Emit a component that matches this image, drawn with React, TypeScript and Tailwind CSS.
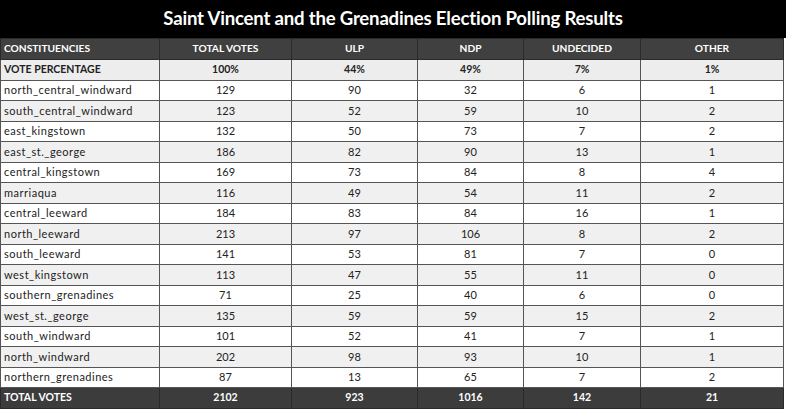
const rows: [string, number, number, number, number, number][] = [
  ['north_central_windward', 129, 90, 32, 6, 1],
  ['south_central_windward', 123, 52, 59, 10, 2],
  ['east_kingstown', 132, 50, 73, 7, 2],
  ['east_st._george', 186, 82, 90, 13, 1],
  ['central_kingstown', 169, 73, 84, 8, 4],
  ['marriaqua', 116, 49, 54, 11, 2],
  ['central_leeward', 184, 83, 84, 16, 1],
  ['north_leeward', 213, 97, 106, 8, 2],
  ['south_leeward', 141, 53, 81, 7, 0],
  ['west_kingstown', 113, 47, 55, 11, 0],
  ['southern_grenadines', 71, 25, 40, 6, 0],
  ['west_st._george', 135, 59, 59, 15, 2],
  ['south_windward', 101, 52, 41, 7, 1],
  ['north_windward', 202, 98, 93, 10, 1],
  ['northern_grenadines', 87, 13, 65, 7, 2],
];

const headers = ['CONSTITUENCIES', 'TOTAL VOTES', 'ULP', 'NDP', 'UNDECIDED', 'OTHER'];
const widths = ['w-[159px]', 'w-[132px]', 'w-[126px]', 'w-[106px]', 'w-[117px]', 'w-[143px]'];

export default function App() {
  return (
    <div className="w-[786px] h-[410px] bg-white font-['Lato',sans-serif] text-[#222]">
      <div className="h-[38px] bg-black flex items-center justify-center">
        <h1 className="text-white font-bold text-[18.6px] tracking-[-0.2px]">
          Saint Vincent and the Grenadines Election Polling Results
        </h1>
      </div>
      <table className="w-[784px] table-fixed border-collapse text-[11px]">
        <colgroup>
          {widths.map((w, i) => (
            <col key={i} className={w} />
          ))}
        </colgroup>
        <thead>
          <tr className="h-[21px] bg-[#404040] text-white text-[10.2px]">
            {headers.map((h, i) => (
              <th
                key={h}
                className={`border border-[#2a2a2a] px-[3px] font-bold ${i === 0 ? 'text-left' : 'text-center'}`}
              >
                {h}
              </th>
            ))}
          </tr>
        </thead>
        <tbody>
          <tr className="h-[20.5px] bg-[#ededed] font-bold text-[10.5px]">
            <td className="border border-[#555] px-[3px]">VOTE PERCENTAGE</td>
            <td className="border border-[#555] text-center">100%</td>
            <td className="border border-[#555] text-center">44%</td>
            <td className="border border-[#555] text-center">49%</td>
            <td className="border border-[#555] text-center">7%</td>
            <td className="border border-[#555] text-center">1%</td>
          </tr>
          {rows.map((r, idx) => (
            <tr key={r[0]} className={`h-[20.5px] ${idx % 2 === 0 ? 'bg-white' : 'bg-[#f0f0f0]'}`}>
              <td className="border border-[#555] px-[3px] tracking-[0.5px]">{r[0]}</td>
              {r.slice(1).map((v, i) => (
                <td key={i} className="border border-[#555] text-center">
                  {v}
                </td>
              ))}
            </tr>
          ))}
          <tr className="h-[21px] bg-[#3c3c3c] text-white font-bold text-[10.5px]">
            <td className="border border-[#2a2a2a] px-[3px]">TOTAL VOTES</td>
            <td className="border border-[#2a2a2a] text-center">2102</td>
            <td className="border border-[#2a2a2a] text-center">923</td>
            <td className="border border-[#2a2a2a] text-center">1016</td>
            <td className="border border-[#2a2a2a] text-center">142</td>
            <td className="border border-[#2a2a2a] text-center">21</td>
          </tr>
        </tbody>
      </table>
    </div>
  );
}
